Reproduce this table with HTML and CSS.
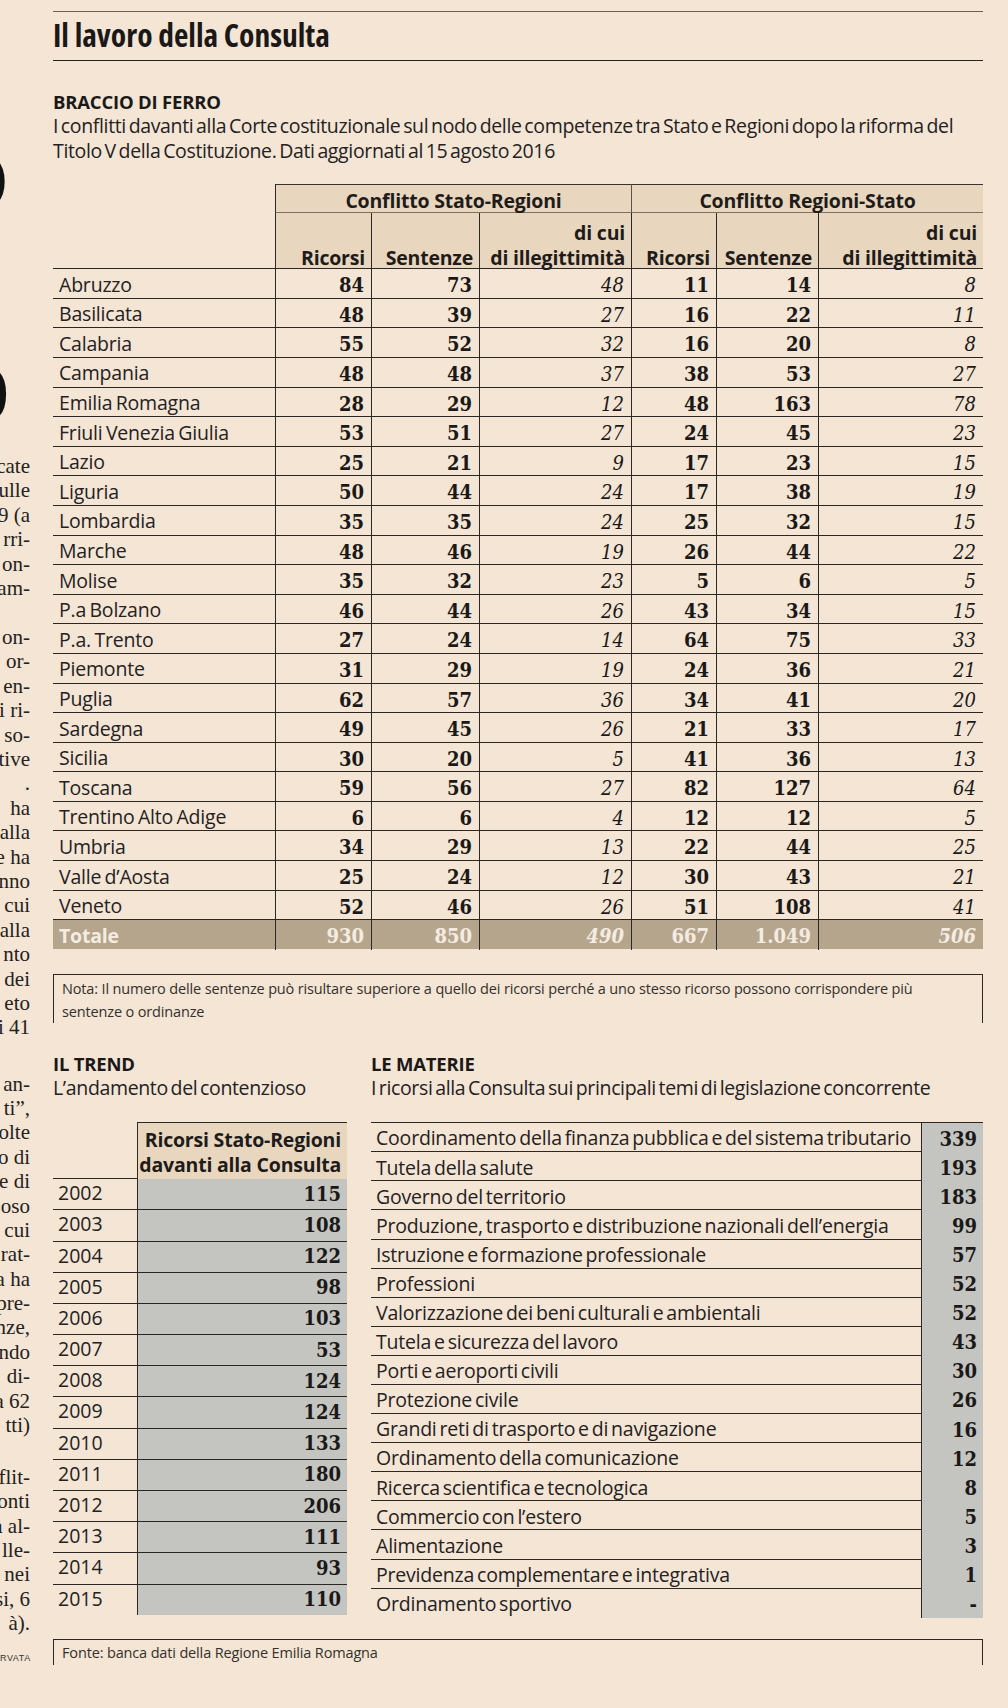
FILE: index.html
```
<!DOCTYPE html>
<html lang="it">
<head>
<meta charset="utf-8">
<title>Il lavoro della Consulta</title>
<link rel="stylesheet" href="styles.css">
</head>
<body>
<div class="page">
  <aside class="gutter">
    <div class="blob1"><span>O</span></div>
    <div class="blob2"><span>)</span></div>
    <div class="gblock ga">
      <div class="gl">cate</div><div class="gl">ulle</div><div class="gl">9 (a</div><div class="gl">rri-</div><div class="gl">on-</div><div class="gl">am-</div>
    </div>
    <div class="gblock gb">
      <div class="gl">on-</div><div class="gl">or-</div><div class="gl">en-</div><div class="gl">i ri-</div><div class="gl">so-</div><div class="gl">tive</div><div class="gl">.</div><div class="gl">ha</div><div class="gl">alla</div><div class="gl">e ha</div><div class="gl">nno</div><div class="gl">cui</div><div class="gl">alla</div><div class="gl">nto</div><div class="gl">dei</div><div class="gl">eto</div><div class="gl">i 41</div>
    </div>
    <div class="gblock gd">
      <div class="gl">an-</div><div class="gl">ti”,</div><div class="gl">olte</div><div class="gl">o di</div><div class="gl">e di</div><div class="gl">oso</div><div class="gl">cui</div><div class="gl">rat-</div><div class="gl">a ha</div><div class="gl">pre-</div><div class="gl">nze,</div><div class="gl">ndo</div><div class="gl">di-</div><div class="gl">a 62</div><div class="gl">tti)</div>
    </div>
    <div class="gblock ge">
      <div class="gl">flit-</div><div class="gl">onti</div><div class="gl">a al-</div><div class="gl">lle-</div><div class="gl">nei</div><div class="gl">si, 6</div><div class="gl">à).</div>
    </div>
    <div class="gcopy">RVATA</div>
  </aside>

  <main class="main">
    <h1 class="title">Il lavoro della Consulta</h1>

    <section class="intro">
      <h2 class="kicker">BRACCIO DI FERRO</h2>
      <p class="lead">I conflitti davanti alla Corte costituzionale sul nodo delle competenze tra Stato e Regioni dopo la riforma del<br>Titolo V della Costituzione. Dati aggiornati al 15 agosto 2016</p>
    </section>

    <div class="ct">
      <div class="gh">
        <div class="c0"></div>
        <div class="grp">Conflitto Stato-Regioni</div>
        <div class="grp grp2">Conflitto Regioni-Stato</div>
      </div>
      <div class="ch">
        <div class="c0"></div>
        <div class="hc"><span class="l2">Ricorsi</span></div>
        <div class="hc"><span class="l2">Sentenze</span></div>
        <div class="hc"><span class="l1">di cui</span><span class="l2">di illegittimità</span></div>
        <div class="hc"><span class="l2">Ricorsi</span></div>
        <div class="hc"><span class="l2">Sentenze</span></div>
        <div class="hc"><span class="l1">di cui</span><span class="l2">di illegittimità</span></div>
      </div>
      <div class="r"><span class="lab">Abruzzo</span><span class="n">84</span><span class="n">73</span><span class="n i">48</span><span class="n">11</span><span class="n">14</span><span class="n i">8</span></div>
      <div class="r"><span class="lab">Basilicata</span><span class="n">48</span><span class="n">39</span><span class="n i">27</span><span class="n">16</span><span class="n">22</span><span class="n i">11</span></div>
      <div class="r"><span class="lab">Calabria</span><span class="n">55</span><span class="n">52</span><span class="n i">32</span><span class="n">16</span><span class="n">20</span><span class="n i">8</span></div>
      <div class="r"><span class="lab">Campania</span><span class="n">48</span><span class="n">48</span><span class="n i">37</span><span class="n">38</span><span class="n">53</span><span class="n i">27</span></div>
      <div class="r"><span class="lab">Emilia Romagna</span><span class="n">28</span><span class="n">29</span><span class="n i">12</span><span class="n">48</span><span class="n">163</span><span class="n i">78</span></div>
      <div class="r"><span class="lab">Friuli Venezia Giulia</span><span class="n">53</span><span class="n">51</span><span class="n i">27</span><span class="n">24</span><span class="n">45</span><span class="n i">23</span></div>
      <div class="r"><span class="lab">Lazio</span><span class="n">25</span><span class="n">21</span><span class="n i">9</span><span class="n">17</span><span class="n">23</span><span class="n i">15</span></div>
      <div class="r"><span class="lab">Liguria</span><span class="n">50</span><span class="n">44</span><span class="n i">24</span><span class="n">17</span><span class="n">38</span><span class="n i">19</span></div>
      <div class="r"><span class="lab">Lombardia</span><span class="n">35</span><span class="n">35</span><span class="n i">24</span><span class="n">25</span><span class="n">32</span><span class="n i">15</span></div>
      <div class="r"><span class="lab">Marche</span><span class="n">48</span><span class="n">46</span><span class="n i">19</span><span class="n">26</span><span class="n">44</span><span class="n i">22</span></div>
      <div class="r"><span class="lab">Molise</span><span class="n">35</span><span class="n">32</span><span class="n i">23</span><span class="n">5</span><span class="n">6</span><span class="n i">5</span></div>
      <div class="r"><span class="lab">P.a Bolzano</span><span class="n">46</span><span class="n">44</span><span class="n i">26</span><span class="n">43</span><span class="n">34</span><span class="n i">15</span></div>
      <div class="r"><span class="lab">P.a. Trento</span><span class="n">27</span><span class="n">24</span><span class="n i">14</span><span class="n">64</span><span class="n">75</span><span class="n i">33</span></div>
      <div class="r"><span class="lab">Piemonte</span><span class="n">31</span><span class="n">29</span><span class="n i">19</span><span class="n">24</span><span class="n">36</span><span class="n i">21</span></div>
      <div class="r"><span class="lab">Puglia</span><span class="n">62</span><span class="n">57</span><span class="n i">36</span><span class="n">34</span><span class="n">41</span><span class="n i">20</span></div>
      <div class="r"><span class="lab">Sardegna</span><span class="n">49</span><span class="n">45</span><span class="n i">26</span><span class="n">21</span><span class="n">33</span><span class="n i">17</span></div>
      <div class="r"><span class="lab">Sicilia</span><span class="n">30</span><span class="n">20</span><span class="n i">5</span><span class="n">41</span><span class="n">36</span><span class="n i">13</span></div>
      <div class="r"><span class="lab">Toscana</span><span class="n">59</span><span class="n">56</span><span class="n i">27</span><span class="n">82</span><span class="n">127</span><span class="n i">64</span></div>
      <div class="r"><span class="lab">Trentino Alto Adige</span><span class="n">6</span><span class="n">6</span><span class="n i">4</span><span class="n">12</span><span class="n">12</span><span class="n i">5</span></div>
      <div class="r"><span class="lab">Umbria</span><span class="n">34</span><span class="n">29</span><span class="n i">13</span><span class="n">22</span><span class="n">44</span><span class="n i">25</span></div>
      <div class="r"><span class="lab">Valle d’Aosta</span><span class="n">25</span><span class="n">24</span><span class="n i">12</span><span class="n">30</span><span class="n">43</span><span class="n i">21</span></div>
      <div class="r"><span class="lab">Veneto</span><span class="n">52</span><span class="n">46</span><span class="n i">26</span><span class="n">51</span><span class="n">108</span><span class="n i">41</span></div>
      <div class="r tot"><span class="lab">Totale</span><span class="n">930</span><span class="n">850</span><span class="n i">490</span><span class="n">667</span><span class="n">1.049</span><span class="n i">506</span></div>
    </div>

    <div class="note">Nota: Il numero delle sentenze può risultare superiore a quello dei ricorsi perché a uno stesso ricorso possono corrispondere più<br>sentenze o ordinanze</div>

    <div class="cols">
      <section class="trend">
        <h2 class="kicker">IL TREND</h2>
        <p class="lead">L’andamento del contenzioso</p>
        <div class="tt">
          <div class="thd"><div class="c0"></div><div class="th"><span class="t1">Ricorsi Stato-Regioni</span><span class="t2">davanti alla Consulta</span></div></div>
          <div class="tr"><span class="yr">2002</span><span class="tv">115</span></div>
          <div class="tr"><span class="yr">2003</span><span class="tv">108</span></div>
          <div class="tr"><span class="yr">2004</span><span class="tv">122</span></div>
          <div class="tr"><span class="yr">2005</span><span class="tv">98</span></div>
          <div class="tr"><span class="yr">2006</span><span class="tv">103</span></div>
          <div class="tr"><span class="yr">2007</span><span class="tv">53</span></div>
          <div class="tr"><span class="yr">2008</span><span class="tv">124</span></div>
          <div class="tr"><span class="yr">2009</span><span class="tv">124</span></div>
          <div class="tr"><span class="yr">2010</span><span class="tv">133</span></div>
          <div class="tr"><span class="yr">2011</span><span class="tv">180</span></div>
          <div class="tr"><span class="yr">2012</span><span class="tv">206</span></div>
          <div class="tr"><span class="yr">2013</span><span class="tv">111</span></div>
          <div class="tr"><span class="yr">2014</span><span class="tv">93</span></div>
          <div class="tr"><span class="yr">2015</span><span class="tv">110</span></div>
        </div>
      </section>
      <section class="materie">
        <h2 class="kicker">LE MATERIE</h2>
        <p class="lead">I ricorsi alla Consulta sui principali temi di legislazione concorrente</p>
        <div class="mt">
          <div class="mr"><span class="ml">Coordinamento della finanza pubblica e del sistema tributario</span><span class="mv">339</span></div>
          <div class="mr"><span class="ml">Tutela della salute</span><span class="mv">193</span></div>
          <div class="mr"><span class="ml">Governo del territorio</span><span class="mv">183</span></div>
          <div class="mr"><span class="ml">Produzione, trasporto e distribuzione nazionali dell’energia</span><span class="mv">99</span></div>
          <div class="mr"><span class="ml">Istruzione e formazione professionale</span><span class="mv">57</span></div>
          <div class="mr"><span class="ml">Professioni</span><span class="mv">52</span></div>
          <div class="mr"><span class="ml">Valorizzazione dei beni culturali e ambientali</span><span class="mv">52</span></div>
          <div class="mr"><span class="ml">Tutela e sicurezza del lavoro</span><span class="mv">43</span></div>
          <div class="mr"><span class="ml">Porti e aeroporti civili</span><span class="mv">30</span></div>
          <div class="mr"><span class="ml">Protezione civile</span><span class="mv">26</span></div>
          <div class="mr"><span class="ml">Grandi reti di trasporto e di navigazione</span><span class="mv">16</span></div>
          <div class="mr"><span class="ml">Ordinamento della comunicazione</span><span class="mv">12</span></div>
          <div class="mr"><span class="ml">Ricerca scientifica e tecnologica</span><span class="mv">8</span></div>
          <div class="mr"><span class="ml">Commercio con l’estero</span><span class="mv">5</span></div>
          <div class="mr"><span class="ml">Alimentazione</span><span class="mv">3</span></div>
          <div class="mr"><span class="ml">Previdenza complementare e integrativa</span><span class="mv">1</span></div>
          <div class="mr"><span class="ml">Ordinamento sportivo</span><span class="mv">-</span></div>
        </div>
      </section>
    </div>

    <div class="fonte">Fonte: banca dati della Regione Emilia Romagna</div>
  </main>
</div>
</body>
</html>
```
FILE: styles.css
```
* { box-sizing: border-box; }
html, body { margin: 0; padding: 0; }
body {
  background: #f4e5d4;
  color: #1e1c1a;
  font-family: "Open Sans", "Liberation Sans", sans-serif;
}
h1, h2, p { margin: 0; font-weight: inherit; }

.page { display: flex; align-items: flex-start; }

/* left clipped column of the neighbouring article */
.gutter {
  width: 53px;
  padding: 150px 23px 0 0;
  overflow: hidden;
  font-family: "Liberation Serif", serif;
  font-size: 21px;
  line-height: 24.4px;
  color: #242120;
}
.blob1, .blob2 {
  width: 9px;
  display: flex;
  justify-content: flex-end;
  overflow: hidden;
  color: #111;
}
.blob1 { height: 62px; font-size: 86px; line-height: 62px; font-weight: 700; }
.blob2 { height: 56px; margin-top: 147.5px; font-size: 66px; line-height: 56px; }
.gl { display: flex; justify-content: flex-end; white-space: nowrap; height: 24.4px; }
.ga { margin-top: 38.5px; }
.gb { margin-top: 24.7px; }
.gd { margin-top: 31.9px; }
.ge { margin-top: 27.4px; }
.gcopy {
  margin-top: 15px;
  text-align: right;
  font-family: "Liberation Sans", sans-serif;
  font-size: 9px;
  line-height: 14px;
  letter-spacing: 0.6px;
  color: #3a3633;
}

.main { width: 930px; padding-top: 11px; }

.title {
  height: 50px;
  border-top: 1px solid #6a5f55;
  border-bottom: 1px solid #262422;
  font-stretch: 75%;
  font-weight: 700;
  font-size: 31.5px;
  line-height: 46px;
  color: #1b1918;
}

.intro { margin-top: 28.7px; }
.kicker {
  font-weight: 700;
  font-size: 18.5px;
  line-height: 24.5px;
  letter-spacing: -0.2px;
  color: #1b1918;
  white-space: nowrap;
}
.lead {
  font-size: 19.5px;
  line-height: 24.5px;
  letter-spacing: -0.35px;
  word-spacing: -2px;
  color: #24211f;
  white-space: nowrap;
}

/* main table */
.ct { margin-top: 21px; }
.gh, .ch, .r {
  display: grid;
  grid-template-columns: 222px 96px 108px 152px 85px 102px 165px;
}
.gh { height: 29px; }
.grp {
  grid-column: span 3;
  background: #e9d6bf;
  border-top: 1px solid #3a342e;
  border-bottom: 1px solid #7c7063;
  border-left: 1px solid #2a2725;
  text-align: center;
  font-weight: 700;
  font-size: 19.5px;
  line-height: 22px;
  padding-top: 5px;
  letter-spacing: -0.2px;
}
.grp2 { border-left-color: #5a5148; }
.ch { height: 55px; }
.hc {
  background: #e9d6bf;
  border-left: 1px solid #2a2725;
  display: flex;
  flex-direction: column;
  justify-content: flex-end;
  text-align: right;
  padding-right: 6px;
  font-weight: 700;
  font-size: 19.5px;
  letter-spacing: -0.2px;
  white-space: nowrap;
}
.hc .l1 { line-height: 29px; }
.hc .l2 { line-height: 21px; }
.r {
  height: 29.6px;
  border-top: 1px solid #2a2725;
}
.lab {
  padding: 2.5px 0 0 6px;
  font-size: 19.5px;
  line-height: 26.6px;
  letter-spacing: -0.2px;
  word-spacing: -1.5px;
  white-space: nowrap;
  color: #24211f;
}
.n {
  border-left: 1px solid #2a2725;
  text-align: right;
  padding: 3px 7px 0 0;
  font-family: "DejaVu Serif Condensed", "DejaVu Serif", serif;
  font-weight: 700;
  font-size: 20px;
  line-height: 26.6px;
  color: #1b1918;
}
.n.i { font-style: italic; font-weight: 400; }
.tot { background: #b5a58d; }
.tot .lab { font-weight: 700; color: #f5ece1; }
.tot .n { color: #f5ece1; }
.tot .n.i { font-weight: 700; }

/* notes */
.note, .fonte {
  border: 1px solid #2a2725;
  border-bottom: 0;
  padding-left: 8px;
  font-size: 14.5px;
  letter-spacing: -0.15px;
  color: #34302c;
  white-space: nowrap;
}
.note { margin-top: 25.3px; height: 49px; padding-top: 2px; line-height: 23px; }
.fonte { margin-top: 22.7px; height: 26px; line-height: 24px; padding-top: 1px; }

/* lower columns */
.cols { display: flex; gap: 24px; margin-top: 28.4px; }
.trend { width: 294px; }
.materie { width: 612px; }
.tt, .mt { margin-top: 21.6px; }

.thd, .tr { display: grid; grid-template-columns: 84px 210px; }
.thd { height: 56px; }
.th {
  background: #e9d6bf;
  border-top: 1px solid #2a2725;
  border-left: 1px solid #2a2725;
  display: flex;
  flex-direction: column;
  justify-content: flex-end;
  text-align: right;
  padding: 0 6px 7px 0;
  font-weight: 700;
  font-size: 19.5px;
  letter-spacing: -0.2px;
  white-space: nowrap;
}
.th .t1 { line-height: 33px; }
.th .t2 { line-height: 17px; }
.tr { height: 31.2px; border-top: 1px solid #2a2725; }
.yr {
  padding: 1px 0 0 5px;
  font-size: 19.5px;
  line-height: 26.6px;
  color: #24211f;
}
.tv, .mv {
  background: #c4c5c1;
  border-left: 1px solid #2a2725;
  text-align: right;
  font-family: "DejaVu Serif Condensed", "DejaVu Serif", serif;
  font-weight: 700;
  font-size: 20px;
  line-height: 26.6px;
  color: #1b1918;
}
.tv { padding: 1.5px 6px 0 0; }

.mr { display: grid; grid-template-columns: 550px 62px; height: 29.1px; border-top: 1px solid #2a2725; }
.ml {
  padding: 2.3px 0 0 5px;
  font-size: 19.5px;
  line-height: 26.6px;
  letter-spacing: -0.2px;
  word-spacing: -2px;
  white-space: nowrap;
  color: #24211f;
}
.mv { padding: 2.5px 6px 0 0; }
```
